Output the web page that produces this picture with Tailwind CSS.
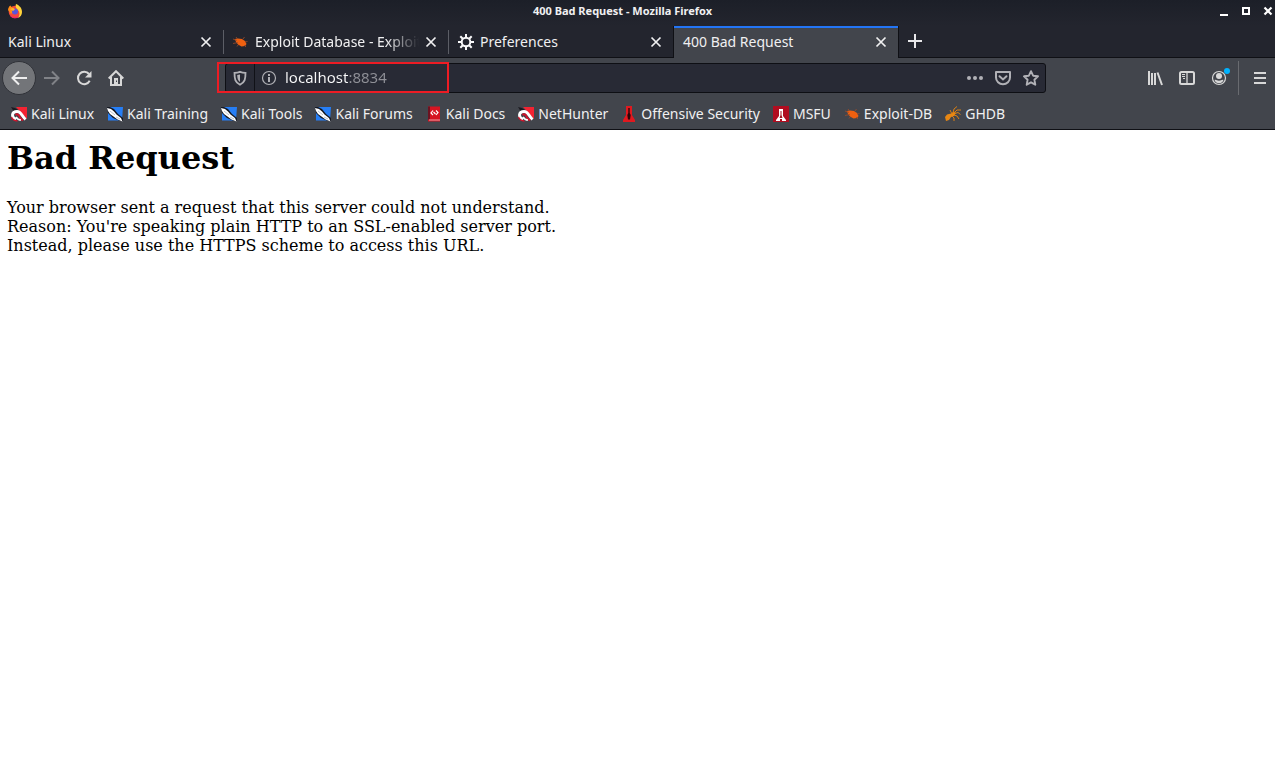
<!DOCTYPE html>
<html lang="en">
  <head>
    <meta charset="UTF-8" />
    <meta name="viewport" content="width=device-width, initial-scale=1.0" />
    <script src="https://cdn.jsdelivr.net/npm/@tailwindcss/browser@4"></script>
    <title>400 Bad Request - Mozilla Firefox</title>
  </head>
  <body class="flex flex-col min-h-screen bg-white font-['Noto_Sans',sans-serif]">
    <!-- shared icons -->
    <svg class="hidden">
      <symbol id="close" viewBox="0 0 16 16">
        <path d="M3.500 3.500l9 9M12.500 3.500l-9 9" fill="none" stroke="currentColor" stroke-width="1.700" />
      </symbol>
      <symbol id="bug" viewBox="0 0 16 16">
        <path d="M3 5l3-.5 4 .5 3 2 1.500 3-1.400 2-3.600.6-3.500-2L4 8z" fill="#ee6010" />
        <path d="M1 5l4 1.500M1 9.500l5-1M4 3l1.500 2M5 12.500l1.500-2M14 13l-2-2M11 5l1.500-2M13 8l2.500-.5" fill="none" stroke="#a04c2a" stroke-width=".8" />
      </symbol>
      <symbol id="dragon" viewBox="0 0 16 16">
        <path d="M5 1h11v12z" fill="#f32332" />
        <path d="M0 1l4 1 3 2-4 2z" fill="#1c1a20" />
        <path d="M5 13.500C-.5 10.500 1 5.500 6 5.500c4 0 4.500 4 8.500 8" fill="none" stroke="#fff" stroke-width="2.800" />
        <path d="M4.500 9c1.500-1.500 3-.8 4.500 2.500 1 1.500 2 2 3 3" fill="none" stroke="#d3132b" stroke-width="2" />
        <path d="M5 11c1.500 2.500 3 3 5 3" fill="none" stroke="#fff" stroke-width="1.600" />
        <path d="M.5 11c1 2.500 3 3.700 6 4" fill="none" stroke="#d3132b" stroke-width="1.300" />
      </symbol>
      <symbol id="knife" viewBox="0 0 16 16">
        <path d="M1 1h15l-1 13.500H1z" fill="#267ef5" />
        <path d="M0 1h3l4 2 4 5 5 4v3h-3L6 12 1 7z" fill="#151923" />
        <path d="M0 2l4 1 3 2.500 2.500 3L14 12l1.500 3.500-5-2-4-3L3 8 1 5z" fill="#fff" />
        <path d="M3 5l5 4M9 11l4 2" stroke="#9aa8ba" stroke-width=".7" />
      </symbol>
    </svg>

    <header class="flex flex-col text-[#f0f0f1] text-sm">
      <!-- title bar -->
      <div class="flex items-center justify-between h-[26px] pl-[7px] pb-1 bg-linear-to-b from-[#1c1f28] to-[#23252e]">
        <svg class="h-4 w-4" viewBox="0 0 16 16">
          <circle cx="8" cy="9" r="6.300" fill="#f4463c" />
          <path d="M1 7c.2-2 1-3.500 2.300-4.500L5 4.500c2 0 3 .8 3 2L4 11z" fill="#ff8a16" />
          <path d="M9 1c3.500 1.500 6 4 6 8 0 3-1.500 5-4 6 2-3 2-6 0-8-1.500-1.500-3-3-2-6z" fill="#ffd43a" />
          <circle cx="8" cy="8.500" r="3" fill="#5a55dc" />
          <path d="M3 6l3-1 2 1.500L6 8z" fill="#ffb02a" />
          <path d="M2 10c1 4 6 6 10 3-2 3-8 3.500-10-3z" fill="#e31587" />
        </svg>
        <h2 class="flex-1 pl-[6px] text-center text-[11px] font-bold">400 Bad Request - Mozilla Firefox</h2>
        <div class="flex gap-[6px] -mr-px">
          <button aria-label="Minimize" class="size-4">
            <svg viewBox="0 0 16 16"><path d="M4 11h8v2H4z" fill="#fff" /></svg>
          </button>
          <button aria-label="Maximize" class="size-4">
            <svg viewBox="0 0 16 16"><path d="M5 5h6v6H5z" fill="none" stroke="#fff" stroke-width="2" /></svg>
          </button>
          <button aria-label="Close window" class="size-4">
            <svg viewBox="0 0 16 16"><path d="M4.500 4.500l7 7M11.500 4.500l-7 7" stroke="#fff" stroke-width="2.200" /></svg>
          </button>
        </div>
      </div>

      <!-- tabs -->
      <nav class="flex h-8 bg-[#23252e]" aria-label="Tabs">
        <div class="flex items-center w-56 pl-2 pr-[10px] border-b border-[#0f1015]">
          <a href="#" class="flex-1">Kali Linux</a>
          <button aria-label="Close tab" class="size-4"><svg viewBox="0 0 16 16"><use href="#close" /></svg></button>
        </div>
        <div class="relative flex items-center w-[225px] pl-2 pr-[10px] border-b border-[#0f1015] before:absolute before:-left-px before:top-1 before:h-6 before:w-px before:bg-[#5c5e66]">
          <svg class="size-4 shrink-0 mr-[7px]"><use href="#bug" /></svg>
          <a href="#" class="flex-1 overflow-hidden whitespace-nowrap mask-r-from-80% mask-r-to-100%">Exploit Database - Exploit</a>
          <button aria-label="Close tab" class="size-4 ml-1"><svg viewBox="0 0 16 16"><use href="#close" /></svg></button>
        </div>
        <div class="relative flex items-center w-56 px-[9px] border-b border-[#0f1015] before:absolute before:-left-px before:top-1 before:h-6 before:w-px before:bg-[#5c5e66]">
          <svg class="size-4 shrink-0 mr-[6px]" viewBox="0 0 16 16">
            <circle cx="8" cy="8" r="4.300" fill="none" stroke="#f9f9fa" stroke-width="2" />
            <path d="M8 0v3.500M8 12.500V16M0 8h3.500M12.500 8H16M2.300 2.300l2.500 2.500M11.200 11.200l2.500 2.500M13.700 2.300l-2.500 2.500M4.800 11.200l-2.500 2.500" stroke="#f9f9fa" stroke-width="2" />
          </svg>
          <a href="#" class="flex-1">Preferences</a>
          <button aria-label="Close tab" class="size-4"><svg viewBox="0 0 16 16"><use href="#close" /></svg></button>
        </div>
        <div class="flex items-center w-[226px] px-[9px] border-x border-[#0f1015] bg-[#42454c] shadow-[inset_0_2px_0_#2375f5]">
          <a href="#" aria-current="page" class="flex-1">400 Bad Request</a>
          <button aria-label="Close tab" class="size-4"><svg viewBox="0 0 16 16"><use href="#close" /></svg></button>
        </div>
        <div class="flex flex-1 items-center pl-2 border-b border-[#0f1015]">
          <button aria-label="New tab" class="size-4">
            <svg viewBox="0 0 16 16"><path d="M8 0v14M1 7h14" stroke="#e8e8ea" stroke-width="2" /></svg>
          </button>
        </div>
      </nav>

      <!-- navigation toolbar -->
      <div class="flex items-center h-10 pl-[2px] bg-[#42454c] text-[#d8d8d8]">
        <button aria-label="Back" class="flex items-center justify-center size-[34px] rounded-full border border-[#303238] bg-[#737579]">
          <svg class="size-4" viewBox="0 0 16 16"><path d="M16 8H1.500M8 1.500L1.500 8 8 14.500" fill="none" stroke="#eee" stroke-width="2" /></svg>
        </button>
        <button aria-label="Forward" class="flex items-center justify-center size-8" disabled>
          <svg class="size-4" viewBox="0 0 16 16"><path d="M0 8h14.500M8 1.500L14.500 8 8 14.500" fill="none" stroke="#808287" stroke-width="2" /></svg>
        </button>
        <button aria-label="Reload" class="flex items-center justify-center size-8">
          <svg class="size-4" viewBox="0 0 16 16">
            <path d="M13 4A6.200 6.200 0 1 0 13.700 10.800" fill="none" stroke="currentColor" stroke-width="2" />
            <path d="M15.500 1v6.500H9z" fill="currentColor" />
          </svg>
        </button>
        <button aria-label="Home" class="flex items-center justify-center size-8">
          <svg class="size-4" viewBox="0 0 16 16">
            <path d="M.7 8.500L8 1.200l7.300 7.300M3 7v8h10V7" fill="none" stroke="currentColor" stroke-width="2" />
            <path d="M6 8h4v7H6z" fill="currentColor" />
            <path d="M8 10.500h1V12H8z" fill="#42454c" />
          </svg>
        </button>

        <div class="relative flex flex-1 items-center h-[30px] mx-[93px] px-[6px] rounded-[3px] border border-[#0e0f14] bg-[#282a35] text-[#b1b1b6]">
          <span class="absolute -left-[9px] -top-[2px] h-[31px] w-[232px] border-2 border-[#ed1c24] pointer-events-none"></span>
          <button aria-label="Tracking protection" class="size-4">
            <svg viewBox="0 0 16 16">
              <path d="M8 1.800c-2 .8-3.700 1-5.500 1 0 6 .5 9.500 5.500 11.900 5-2.400 5.500-5.900 5.500-11.900-1.800 0-3.500-.2-5.500-1z" fill="none" stroke="currentColor" stroke-width="1.800" />
              <path d="M8 4.500v7.500c-2.200-1.400-2.700-3.500-2.800-7 1-.1 1.900-.2 2.800-.5z" fill="currentColor" />
            </svg>
          </button>
          <span class="h-full w-px mx-[6px] bg-[#101117]"></span>
          <button aria-label="Site information" class="size-4">
            <svg viewBox="0 0 16 16">
              <circle cx="8" cy="8" r="6.500" fill="none" stroke="currentColor" stroke-width="1.200" />
              <path d="M7 4h2v2H7zM7 7h2v5H7z" fill="currentColor" />
            </svg>
          </button>
          <input
            type="text"
            aria-label="Address"
            value="localhost:8834"
            class="flex-1 min-w-0 ml-2 text-[15px] outline-none text-transparent bg-clip-text bg-linear-to-r from-[#f9f9fa] from-[63px] to-[#8f9097] to-[63px]"
          />
          <div class="flex gap-3">
            <button aria-label="Page actions" class="size-4">
              <svg viewBox="0 0 16 16" fill="currentColor"><circle cx="2" cy="8" r="2" /><circle cx="8" cy="8" r="2" /><circle cx="14" cy="8" r="2" /></svg>
            </button>
            <button aria-label="Save to Pocket" class="size-4">
              <svg viewBox="0 0 16 16" fill="none" stroke="currentColor" stroke-width="2">
                <path d="M1 2h14v5.500a7 6.700 0 0 1-14 0z" stroke-linejoin="round" />
                <path d="M4.500 6.200L8 9.500l3.500-3.300" stroke-linecap="round" />
              </svg>
            </button>
            <button aria-label="Bookmark this page" class="size-4">
              <svg viewBox="0 0 16 16"><path d="M8 1.200l2.100 4.500 4.900.6-3.600 3.400.9 5L8 12.300l-4.300 2.400.9-5L1 6.300l4.900-.6z" fill="none" stroke="currentColor" stroke-width="1.900" stroke-linejoin="round" /></svg>
            </button>
          </div>
        </div>

        <button aria-label="Library" class="flex items-center justify-center size-8">
          <svg class="size-4" viewBox="0 0 16 16"><path d="M2 1v14M5 3v12M8 3v12M10.500 2.500L15 15" stroke="currentColor" stroke-width="2" /></svg>
        </button>
        <button aria-label="Sidebars" class="flex items-center justify-center size-8">
          <svg class="size-4" viewBox="0 0 16 16">
            <rect x="1" y="2" width="14" height="12" rx="1.500" fill="none" stroke="currentColor" stroke-width="2" />
            <path d="M8 2v12" stroke="currentColor" stroke-width="1.300" />
            <path d="M3 4.500h3M3 6.500h3M4 8.500h2" stroke="currentColor" />
          </svg>
        </button>
        <button aria-label="Account" class="relative flex items-center justify-center size-8">
          <svg class="size-4" viewBox="0 0 16 16">
            <circle cx="8" cy="8" r="6.500" fill="none" stroke="currentColor" stroke-width="1.200" />
            <circle cx="8" cy="6" r="3" fill="currentColor" />
            <path d="M3.500 10c1.500-.6 2.500.8 4.500.8s3-1.400 4.500-.8c-.8 2.200-2.500 3.200-4.500 3.200S4.300 12.200 3.500 10z" fill="currentColor" />
          </svg>
          <span class="absolute right-[5px] top-[6px] size-[6px] rounded-full bg-[#00b3ff]"></span>
        </button>
        <span class="h-[34px] w-px ml-[3px] mr-[5px] bg-[#696b70]"></span>
        <button aria-label="Menu" class="flex items-center justify-center size-8 -mr-px">
          <svg class="size-4" viewBox="0 0 16 16"><path d="M2 3h12M2 8h12M2 13h12" stroke="currentColor" stroke-width="2" /></svg>
        </button>
      </div>

      <!-- bookmarks toolbar -->
      <nav class="flex items-center gap-[13px] h-8 pl-[11px] border-b border-[#0f1015] bg-[#42454c] whitespace-nowrap" aria-label="Bookmarks">
        <a href="#" class="flex items-center gap-1"><svg class="size-4"><use href="#dragon" /></svg>Kali Linux</a>
        <a href="#" class="flex items-center gap-1"><svg class="size-4"><use href="#knife" /></svg>Kali Training</a>
        <a href="#" class="flex items-center gap-1"><svg class="size-4"><use href="#knife" /></svg>Kali Tools</a>
        <a href="#" class="flex items-center gap-1"><svg class="size-4"><use href="#knife" /></svg>Kali Forums</a>
        <a href="#" class="flex items-center gap-1">
          <svg class="size-4" viewBox="0 0 16 16">
            <path d="M2 .5h12v15H2z" fill="#d51522" />
            <path d="M2 .5h2v13H2z" fill="#6c1221" />
            <path d="M3 13.500h11v1H3z" fill="#e8a3a8" />
            <path d="M7 4.500L5 7l2 2M10 4.500l2 2L10 9M7.500 6l2 2" fill="none" stroke="#fff" stroke-width="1.200" />
          </svg>Kali Docs</a>
        <a href="#" class="flex items-center gap-1"><svg class="size-4"><use href="#dragon" /></svg>NetHunter</a>
        <a href="#" class="flex items-center gap-1">
          <svg class="size-4" viewBox="0 0 16 16">
            <path d="M5 0h6v9l3 5v2H2v-2l3-5z" fill="#e0191f" />
            <path d="M7.300 2h1.400v5l1 2-.7 4.500H7L6.300 9l1-2z" fill="#2a0709" />
          </svg>Offensive Security</a>
        <a href="#" class="flex items-center gap-1">
          <svg class="size-4" viewBox="0 0 16 16">
            <path d="M0 0h16v16H0z" fill="#b00d20" />
            <path d="M6 3h4v7l3 4v1H9v-2H7v2H3v-1l3-4z" fill="#fff" />
            <path d="M7.500 5h1v4l1 3h-3l1-3z" fill="#a01522" />
          </svg>MSFU</a>
        <a href="#" class="flex items-center gap-1"><svg class="size-4"><use href="#bug" /></svg>Exploit-DB</a>
        <a href="#" class="flex items-center gap-1">
          <svg class="size-4" viewBox="0 0 16 16">
            <path d="M0 11l2-2.500 4-1 3-2 2 1.500-2 3-3 1-2 3-3 1z" fill="#e88713" />
            <path d="M8 7l1-4 3-2.500M9 7l3-3h4M10 7.500l3-1 2.500 2M9 9l3 1 2 3M7 10l2 2v3M7 8L5 4" fill="none" stroke="#d98014" stroke-width="1" />
          </svg>GHDB</a>
      </nav>
    </header>

    <main class="flex-1 px-[7px] pt-[9px] text-black text-base leading-[19px] font-['DejaVu_Serif',serif]">
      <h1 class="mb-[21px] text-[32px] leading-[38px] font-bold">Bad Request</h1>
      <p>
        Your browser sent a request that this server could not understand.<br />
        Reason: You're speaking plain HTTP to an SSL-enabled server port.<br />
        Instead, please use the HTTPS scheme to access this URL.
      </p>
    </main>
  </body>
</html>
